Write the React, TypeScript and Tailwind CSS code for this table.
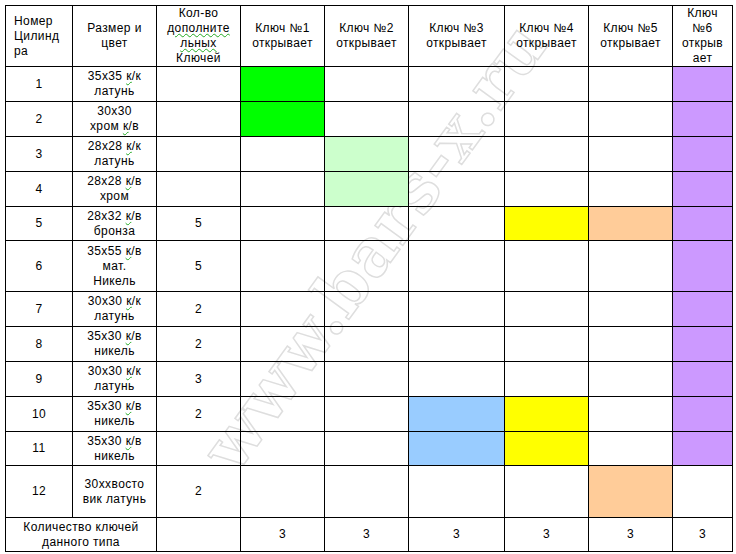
import React from "react";

type Row = {
  num: string;
  size: React.ReactNode;
  extra: string;
  colors: string[];
  h: string;
};

const W = "bg-white";
const GREEN = "bg-[#00ff00]";
const LGREEN = "bg-[#ccffcc]";
const YELLOW = "bg-[#ffff00]";
const PEACH = "bg-[#ffcc99]";
const PURPLE = "bg-[#cc99ff]";
const BLUE = "bg-[#99ccff]";

// green squiggle from the spell checker
const Sp: React.FC<{ children: React.ReactNode }> = ({ children }) => (
  <span className="underline decoration-wavy decoration-[#22aa22] decoration-1 underline-offset-[1px]">
    {children}
  </span>
);

const size = (a: string, kind: string, rest: string) => (
  <>
    {a} <Sp>к</Sp>/{kind}
    <br />
    {rest}
  </>
);

const rows: Row[] = [
  { num: "1", size: size("35x35", "к", "латунь"), extra: "", colors: [GREEN, W, W, W, W, PURPLE], h: "h-[35px]" },
  {
    num: "2",
    size: (
      <>
        30x30
        <br />
        хром <Sp>к</Sp>/в
      </>
    ),
    extra: "",
    colors: [GREEN, W, W, W, W, PURPLE],
    h: "h-[35px]",
  },
  { num: "3", size: size("28x28", "к", "латунь"), extra: "", colors: [W, LGREEN, W, W, W, PURPLE], h: "h-[35px]" },
  { num: "4", size: size("28x28", "в", "хром"), extra: "", colors: [W, LGREEN, W, W, W, PURPLE], h: "h-[35px]" },
  { num: "5", size: size("28x32", "в", "бронза"), extra: "5", colors: [W, W, W, YELLOW, PEACH, PURPLE], h: "h-[34px]" },
  {
    num: "6",
    size: (
      <>
        35x55 <Sp>к</Sp>/в
        <br />
        мат.
        <br />
        Никель
      </>
    ),
    extra: "5",
    colors: [W, W, W, W, W, PURPLE],
    h: "h-[51px]",
  },
  { num: "7", size: size("30x30", "к", "латунь"), extra: "2", colors: [W, W, W, W, W, PURPLE], h: "h-[35px]" },
  { num: "8", size: size("35x30", "в", "никель"), extra: "2", colors: [W, W, W, W, W, PURPLE], h: "h-[35px]" },
  { num: "9", size: size("30x30", "к", "латунь"), extra: "3", colors: [W, W, W, W, W, PURPLE], h: "h-[35px]" },
  { num: "10", size: size("35x30", "в", "никель"), extra: "2", colors: [W, W, BLUE, YELLOW, W, PURPLE], h: "h-[35px]" },
  { num: "11", size: size("35x30", "в", "никель"), extra: "", colors: [W, W, BLUE, YELLOW, W, PURPLE], h: "h-[34px]" },
  {
    num: "12",
    size: (
      <>
        30xxвосто
        <br />
        вик латунь
      </>
    ),
    extra: "2",
    colors: [W, W, W, W, PEACH, W],
    h: "h-[52px]",
  },
];

const cell = "border border-black p-0 text-center align-middle";

export default function App() {
  return (
    <div className="relative w-[736px] h-[554px] bg-white overflow-hidden font-['Liberation_Sans',Arial,sans-serif] text-[12px] leading-[15px] tracking-[0.4px] text-black">
      {/* watermark */}
      <div className="pointer-events-none absolute left-[374px] top-[246px] -translate-x-1/2 -translate-y-1/2 -rotate-[54deg] whitespace-nowrap font-['DejaVu_Serif',serif] font-bold text-[66px] leading-none tracking-[1px] text-transparent [-webkit-text-stroke:1.5px_#dedede]">
        www.bars-x.ru
      </div>

      <div className="relative pl-[5px] pt-[5px]">
        <table className="table-fixed border-collapse w-[728px] bg-transparent">
          <colgroup>
            <col className="w-[67px]" />
            <col className="w-[84px]" />
            <col className="w-[84px]" />
            <col className="w-[84px]" />
            <col className="w-[84px]" />
            <col className="w-[96px]" />
            <col className="w-[84px]" />
            <col className="w-[84px]" />
            <col className="w-[60px]" />
          </colgroup>
          <tbody>
            <tr className="h-[61px]">
              <td className={`${cell} text-left pl-[8px]`}>
                Номер
                <br />
                Цилинд
                <br />
                ра
              </td>
              <td className={cell}>
                Размер и
                <br />
                цвет
              </td>
              <td className={cell}>
                Кол-во
                <br />
                <Sp>дополните</Sp>
                <br />
                <Sp>льных</Sp>
                <br />
                Ключей
              </td>
              {[1, 2, 3, 4, 5].map((n) => (
                <td key={n} className={cell}>
                  Ключ №{n}
                  <br />
                  открывает
                </td>
              ))}
              <td className={cell}>
                Ключ
                <br />
                №6
                <br />
                открыв
                <br />
                ает
              </td>
            </tr>
            {rows.map((r) => (
              <tr key={r.num} className={r.h}>
                <td className={cell}>{r.num}</td>
                <td className={cell}>{r.size}</td>
                <td className={cell}>{r.extra}</td>
                {r.colors.map((c, i) => (
                  <td key={i} className={`${cell} ${c === W ? "" : c}`} />
                ))}
              </tr>
            ))}
            <tr className="h-[34px]">
              <td colSpan={2} className={cell}>
                Количество ключей
                <br />
                данного типа
              </td>
              <td className={cell} />
              {[0, 1, 2, 3, 4, 5].map((i) => (
                <td key={i} className={cell}>
                  3
                </td>
              ))}
            </tr>
          </tbody>
        </table>
      </div>
    </div>
  );
}
